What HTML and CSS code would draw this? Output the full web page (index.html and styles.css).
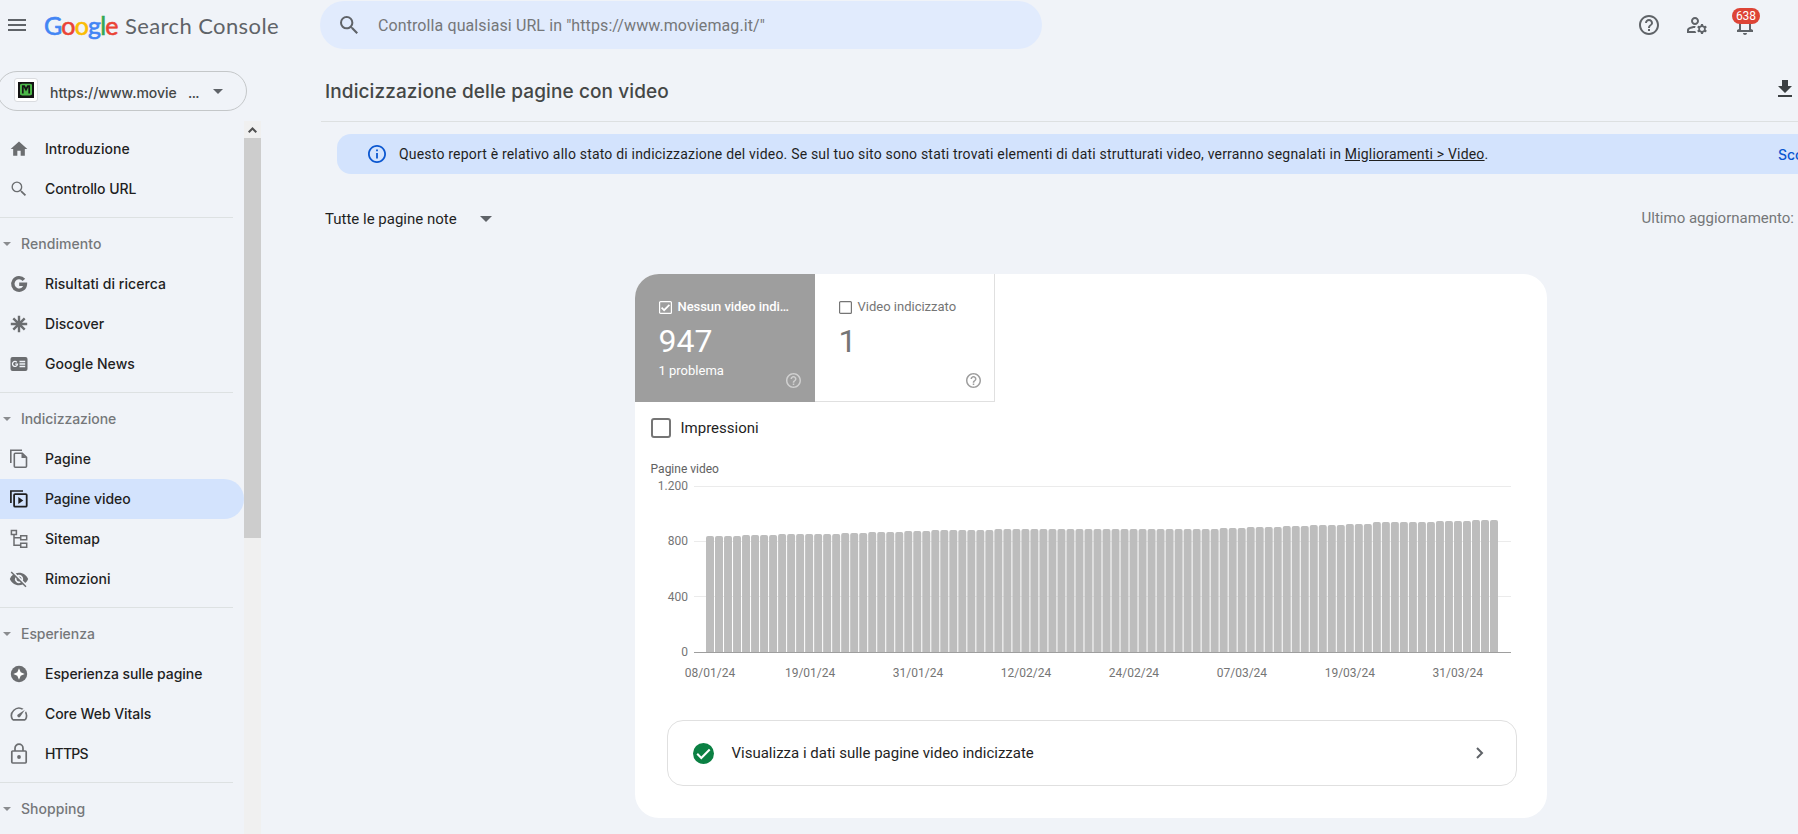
FILE: index.html
```html
<!DOCTYPE html>
<html lang="it">
<head>
<meta charset="utf-8">
<title>Google Search Console</title>
<link rel="stylesheet" href="styles.css">
</head>
<body>
<div class="app">
  <header class="topbar">
    <div class="brand">
      <svg class="menu-icon" viewBox="0 0 18 12" width="18" height="12"><path d="M0 1h18M0 6h18M0 11h18" stroke="#5f6368" stroke-width="2"/></svg>
      <span class="google"><span class="blue">G</span><span class="red">o</span><span class="yellow">o</span><span class="blue">g</span><span class="green">l</span><span class="red">e</span></span>
      <span class="product">Search Console</span>
    </div>
    <div class="search">
      <svg viewBox="3 3 17.5 17.5" width="18" height="18"><path fill="#5f6368" d="M15.5 14h-.79l-.28-.27A6.47 6.47 0 0 0 16 9.5 6.5 6.5 0 1 0 9.5 16c1.61 0 3.09-.59 4.23-1.57l.27.28v.79l5 4.99L20.49 19l-4.99-5zm-6 0C7.01 14 5 11.99 5 9.5S7.01 5 9.5 5 14 7.01 14 9.5 11.99 14 9.5 14z"/></svg>
      <span class="search-text">Controlla qualsiasi URL in "https://www.moviemag.it/"</span>
    </div>
    <div class="actions">
      <svg viewBox="0 0 24 24" width="24" height="24"><path fill="#5f6368" d="M11 18h2v-2h-2v2zm1-16C6.48 2 2 6.48 2 12s4.48 10 10 10 10-4.48 10-10S17.52 2 12 2zm0 18c-4.41 0-8-3.59-8-8s3.59-8 8-8 8 3.59 8 8-3.59 8-8 8zm0-14c-2.21 0-4 1.79-4 4h2c0-1.1.9-2 2-2s2 .9 2 2c0 2-3 1.75-3 5h2c0-2.25 3-2.5 3-5 0-2.21-1.79-4-4-4z"/></svg>
      <svg viewBox="0 0 24 24" width="24" height="24"><path fill="#5f6368" d="M4 18v-.65c0-.34.16-.66.41-.81C6.1 15.53 8.03 15 10 15c.03 0 .05 0 .08.01.1-.7.3-1.37.59-1.98-.22-.02-.44-.03-.67-.03-2.42 0-4.68.67-6.61 1.82-.88.52-1.39 1.5-1.39 2.53V20h9.26c-.42-.6-.75-1.28-.97-2H4zM10 12c2.21 0 4-1.79 4-4s-1.79-4-4-4-4 1.79-4 4 1.79 4 4 4zm0-6c1.1 0 2 .9 2 2s-.9 2-2 2-2-.9-2-2 .9-2 2-2zM20.75 16c0-.22-.03-.42-.06-.63l1.14-1.01-1-1.73-1.45.49c-.32-.27-.68-.48-1.08-.63L18 11h-2l-.3 1.49c-.4.15-.76.36-1.08.63l-1.45-.49-1 1.73 1.14 1.01c-.03.21-.06.41-.06.63s.03.42.06.63l-1.14 1.01 1 1.73 1.45-.49c.32.27.68.48 1.08.63L16 21h2l.3-1.49c.4-.15.76-.36 1.08-.63l1.45.49 1-1.73-1.14-1.01c.03-.21.06-.41.06-.63zM17 18c-1.1 0-2-.9-2-2s.9-2 2-2 2 .9 2 2-.9 2-2 2z"/></svg>
      <div class="bell">
        <svg viewBox="0 0 24 24" width="24" height="24"><path fill="#5f6368" d="M12 22c1.1 0 2-.9 2-2h-4c0 1.1.9 2 2 2zm6-6v-5c0-3.07-1.63-5.64-4.5-6.32V4c0-.83-.67-1.5-1.5-1.5s-1.5.67-1.5 1.5v.68C7.64 5.36 6 7.92 6 11v5l-2 1v2h16v-2l-2-1zm-2 1H8v-6c0-2.48 1.51-4.5 4-4.5s4 2.02 4 4.5v6z"/></svg>
        <span class="badge">638</span>
      </div>
    </div>
  </header>

  <div class="body">
    <aside class="sidebar">
      <div class="property">
        <span class="favicon"><svg viewBox="0 0 16 16" width="16" height="16"><rect width="16" height="16" fill="#141414"/><path d="M2 2.5l2-.8h8l2 .8v10l-2 1H4l-2-1z" fill="#4cb748"/><path d="M4.800 11.500V4.200h1.400L8 7.600l1.800-3.400h1.400v7.300" stroke="#141414" stroke-width="1.700" fill="none"/></svg></span>
        <span class="property-name">https://www.movie</span>
        <span class="dots">...</span>
        <svg class="property-arrow" viewBox="0 0 10 5" width="10" height="5"><path d="M0 0h10L5 5z" fill="#5f6368"/></svg>
      </div>
      <div class="nav-wrap">
        <nav class="nav">
          <a class="item"><svg viewBox="0 0 24 24" width="20" height="20"><path d="M10 20v-6h4v6h5v-8h3L12 3 2 12h3v8z"/></svg><span>Introduzione</span></a>
          <a class="item"><svg viewBox="0 0 24 24" width="20" height="20"><path d="M15.500 14h-.79l-.28-.27A6.470 6.470 0 0 0 16 9.500 6.500 6.500 0 1 0 9.500 16c1.610 0 3.090-.59 4.230-1.570l.27.28v.79l5 4.990L20.490 19l-4.990-5zm-6 .4C7 14.400 4.600 12 4.600 9.500S7 4.600 9.500 4.600s4.900 2.400 4.900 4.900-2.400 4.900-4.900 4.900z"/></svg><span class="snug">Controllo URL</span></a>
          <hr>
          <div class="group"><i class="caret"></i><span>Rendimento</span></div>
          <a class="item"><svg viewBox="0 0 20 20" width="20" height="20"><path d="M14.900 5.800A6.300 6.300 0 1 0 16.400 10.300H10.200" fill="none" stroke="#6b6d70" stroke-width="3.400"/></svg><span>Risultati di ricerca</span></a>
          <a class="item"><svg viewBox="0 0 20 20" width="20" height="20"><path d="M10 1.800v16.400M1.800 10h16.400M4.300 4.300l11.400 11.400M15.700 4.300L4.300 15.700" fill="none" stroke="#6b6d70" stroke-width="2.400"/></svg><span>Discover</span></a>
          <a class="item"><svg viewBox="0 0 20 20" width="20" height="20"><rect x="1.500" y="3" width="17" height="14" rx="2"/><path d="M7.800 8.200A2.500 2.500 0 1 0 8.500 10.200H6.200M10.500 7.500h5.700M10.500 10h5.700M10.500 12.500h5.700" fill="none" stroke="#f0f3f8" stroke-width="1.300"/></svg><span>Google News</span></a>
          <hr>
          <div class="group"><i class="caret"></i><span class="snug">Indicizzazione</span></div>
          <a class="item"><svg viewBox="0 0 20 20" width="20" height="20"><path d="M1.800 14V1.300H13M5.300 5.200v12c0 .6.400 1 1 1h10.200c.6 0 1-.4 1-1V8.300L13.300 4.200H6.300c-.6 0-1 .4-1 1z" fill="none" stroke="#6b6d70" stroke-width="1.600"/><path d="M12.500 4v5h5z"/></svg><span>Pagine</span></a>
          <a class="item active"><svg viewBox="0 0 20 20" width="20" height="20"><path d="M1.900 14V2H14" fill="none" stroke="#1f1f1f" stroke-width="1.700"/><rect x="5.100" y="5.100" width="12.600" height="12.600" rx="1" fill="none" stroke="#1f1f1f" stroke-width="1.800"/><path d="M9.300 8v7l5-3.500z"/></svg><span class="snug">Pagine video</span></a>
          <a class="item"><svg viewBox="0 0 20 20" width="20" height="20"><path d="M2.400 1.400h5v4h-5zM11.700 6.700h6v4h-6zM11.700 14.200h6v4h-6zM5 5.500v10.700h6.500M5 8.700h6.500" fill="none" stroke="#6b6d70" stroke-width="1.500"/></svg><span>Sitemap</span></a>
          <a class="item"><svg viewBox="0 0 24 24" width="20" height="20"><path d="M12 7c2.760 0 5 2.240 5 5 0 .65-.13 1.260-.36 1.830l2.920 2.920c1.510-1.260 2.700-2.890 3.430-4.750-1.730-4.390-6-7.500-11-7.500-1.400 0-2.740.25-3.980.7l2.160 2.160C10.740 7.130 11.350 7 12 7zM2 4.270l2.740 2.740A11.800 11.800 0 0 0 1 12c1.730 4.390 6 7.500 11 7.500 1.550 0 3.030-.3 4.380-.84l3.350 3.340L21 20.730 3.270 3zM7.530 9.800l1.550 1.550A2.820 2.820 0 0 0 9 12c0 1.660 1.340 3 3 3 .22 0 .44-.03.65-.08l1.550 1.550A5 5 0 0 1 7.530 9.800zm4.310-.78l3.150 3.150.02-.16c0-1.660-1.340-3-3-3z"/></svg><span>Rimozioni</span></a>
          <hr>
          <div class="group"><i class="caret"></i><span class="snug">Esperienza</span></div>
          <a class="item"><svg viewBox="0 0 20 20" width="20" height="20"><circle cx="10" cy="10" r="8.200"/><path d="M10 4.300L11.700 8.300 15.700 10l-4 1.700L10 15.700l-1.700-4L4.300 10l4-1.700z" fill="#fff"/></svg><span class="snug">Esperienza sulle pagine</span></a>
          <a class="item"><svg viewBox="0 0 24 24" width="20" height="20"><path d="M20.380 8.570l-1.230 1.850a8 8 0 0 1-.22 7.580H5.070A8 8 0 0 1 15.580 6.850l1.850-1.230A10 10 0 0 0 3.350 19a2 2 0 0 0 1.720 1h13.850a2 2 0 0 0 1.740-1 10 10 0 0 0-.27-10.440zm-9.790 6.840a2 2 0 0 0 2.830 0l5.660-8.490-8.490 5.660a2 2 0 0 0 0 2.830z"/></svg><span class="snug">Core Web Vitals</span></a>
          <a class="item"><svg viewBox="0 0 20 22" width="20" height="22"><path d="M3.700 8h12.600c.5 0 .9.400.9.900v10.200c0 .5-.4.900-.9.900H3.700c-.5 0-.9-.4-.9-.9V8.900c0-.5.400-.9.900-.9zM6 8V5.200a4 4 0 0 1 8 0V8" fill="none" stroke="#6b6d70" stroke-width="1.700"/><circle cx="10" cy="14" r="1.900"/></svg><span class="caps">HTTPS</span></a>
          <hr>
          <div class="group"><i class="caret"></i><span>Shopping</span></div>
        </nav>
        <div class="scrollbar">
          <div class="scroll-up"><svg viewBox="0 0 9 6" width="9" height="6"><path d="M.7 5.300l3.800-3.800 3.800 3.800" fill="none" stroke="#505050" stroke-width="2"/></svg></div>
          <div class="thumb"></div>
        </div>
      </div>
    </aside>

    <main class="main">
      <div class="title-row">
        <h1>Indicizzazione delle pagine con video</h1>
        <svg viewBox="5 3 14 17" width="14" height="17"><path fill="#3c4043" d="M19 9h-4V3H9v6H5l7 7 7-7zM5 18v2h14v-2H5z"/></svg>
      </div>
      <div class="banner">
        <svg viewBox="2 2 20 20" width="18" height="18"><path fill="#0b57d0" d="M11 7h2v2h-2zm0 4h2v6h-2zm1-9C6.480 2 2 6.480 2 12s4.480 10 10 10 10-4.480 10-10S17.520 2 12 2zm0 18c-4.410 0-8-3.590-8-8s3.590-8 8-8 8 3.590 8 8-3.590 8-8 8z"/></svg>
        <p>Questo report è relativo allo stato di indicizzazione del video. Se sul tuo sito sono stati trovati elementi di dati strutturati video, verranno segnalati in <a>Miglioramenti &gt; Video</a>.</p>
        <span class="learn">Scopri di più</span>
      </div>
      <div class="filter-row">
        <div class="filter"><span>Tutte le pagine note</span><svg viewBox="0 0 12 6" width="12" height="6"><path d="M0 0h12L6 6z" fill="#5f6368"/></svg></div>
        <span class="updated">Ultimo aggiornamento:</span>
      </div>

      <section class="card">
        <div class="tiles">
          <div class="tile selected">
            <div class="tile-label"><svg viewBox="0 0 13 13" width="13" height="13"><rect x=".6" y=".6" width="11.800" height="11.800" rx="1" fill="none" stroke="#fff" stroke-width="1.200"/><path d="M2.600 6.700l2.500 2.500 5.300-5.400" fill="none" stroke="#fff" stroke-width="1.700"/></svg><span>Nessun video indi…</span></div>
            <div class="tile-value">947</div>
            <div class="tile-note">1 problema</div>
            <svg class="help" viewBox="2 2 20 20" width="15" height="15"><path d="M11 18h2v-2h-2v2zm1-16C6.480 2 2 6.480 2 12s4.480 10 10 10 10-4.480 10-10S17.520 2 12 2zm0 18c-4.410 0-8-3.590-8-8s3.590-8 8-8 8 3.590 8 8-3.590 8-8 8zm0-14c-2.210 0-4 1.790-4 4h2c0-1.100.9-2 2-2s2 .9 2 2c0 2-3 1.750-3 5h2c0-2.250 3-2.500 3-5 0-2.210-1.790-4-4-4z"/></svg>
          </div>
          <div class="tile">
            <div class="tile-label"><svg viewBox="0 0 13 13" width="13" height="13"><rect x=".6" y=".6" width="11.800" height="11.800" rx="1" fill="none" stroke="#757575" stroke-width="1.200"/></svg><span>Video indicizzato</span></div>
            <div class="tile-value">1</div>
            <svg class="help" viewBox="2 2 20 20" width="15" height="15"><path d="M11 18h2v-2h-2v2zm1-16C6.480 2 2 6.480 2 12s4.480 10 10 10 10-4.480 10-10S17.520 2 12 2zm0 18c-4.410 0-8-3.590-8-8s3.590-8 8-8 8 3.590 8 8-3.590 8-8 8zm0-14c-2.210 0-4 1.790-4 4h2c0-1.100.9-2 2-2s2 .9 2 2c0 2-3 1.750-3 5h2c0-2.250 3-2.500 3-5 0-2.210-1.790-4-4-4z"/></svg>
          </div>
        </div>
        <div class="impressions"><span class="checkbox"></span><span>Impressioni</span></div>
        <svg class="chart" id="chart" viewBox="635 456 912 234" width="912" height="234"></svg>
        <div class="view-row">
          <svg viewBox="2 2 20 20" width="21" height="21"><path fill="#0b8043" d="M12 2a10 10 0 1 0 0 20 10 10 0 0 0 0-20z"/><path d="M6 12.300l3.900 3.900 8-8" fill="none" stroke="#fff" stroke-width="2"/></svg>
          <span>Visualizza i dati sulle pagine video indicizzate</span>
          <svg class="chevron" viewBox="0 0 8 12" width="8" height="12"><path d="M1 1l5 5-5 5" fill="none" stroke="#5f6368" stroke-width="2"/></svg>
        </div>
      </section>
    </main>
  </div>
</div>
<script src="chart.js"></script>
</body>
</html>
```
FILE: chart.js
```js
const svg = document.getElementById('chart');
const NS = 'http://www.w3.org/2000/svg';

function add(tag, attrs, text) {
  const el = document.createElementNS(NS, tag);
  for (const key in attrs) el.setAttribute(key, attrs[key]);
  if (text) el.textContent = text;
  svg.appendChild(el);
}

const baseline = 652;

add('text', { x: 650.6, y: 473, class: 'chart-title' }, 'Pagine video');
[['1.200', 486], ['800', 541], ['400', 596], ['0', baseline]].forEach(([label, y]) => {
  add('text', { x: 688, y: y + (y === 596 ? 5 : 4), class: 'axis-y' }, label);
  if (y !== baseline) add('rect', { x: 694, y, width: 817, height: 1, class: 'grid' });
});

// [bar height, number of consecutive days]
const runs = [
  [116, 4], [117, 4], [118, 7], [119, 3], [120, 4], [121, 3], [122, 7], [123, 25],
  [124, 3], [125, 4], [126, 3], [127, 4], [128, 3], [130, 7], [131, 4], [132, 3]
];
let day = 0;
runs.forEach(([height, count]) => {
  for (let i = 0; i < count; i++, day++) {
    const x = 706 + day * 9.0115;
    const top = baseline - height;
    add('path', { d: `M${x} ${baseline}V${top + 2}q0-2 2-2h4q2 0 2 2V${baseline}z`, class: 'bar' });
  }
});
add('rect', { x: 694, y: baseline, width: 817, height: 1, class: 'axis' });

['08/01/24', '19/01/24', '31/01/24', '12/02/24', '24/02/24', '07/03/24', '19/03/24', '31/03/24']
  .forEach((label, i) => add('text', { x: i ? 810.1 + (i - 1) * 107.95 : 710, y: 677, class: 'axis-x' }, label));
```
FILE: styles.css
```css
* { box-sizing: border-box; }
body {
  margin: 0;
  background: #f0f3f8;
  font-family: Roboto, sans-serif;
  color: #1f1f1f;
}
svg { display: block; flex: none; }
.app { width: 1798px; height: 834px; overflow: hidden; display: flex; flex-direction: column; }

.topbar { display: flex; height: 71px; flex: none; }
.brand { width: 320px; display: flex; align-items: center; height: 50px; padding-left: 8px; font-family: Lato, sans-serif; white-space: nowrap; }
.menu-icon { margin-right: 18px; }
.google { font-size: 25px; font-weight: 400; width: 81px; letter-spacing: -0.8px; -webkit-text-stroke: 0.6px; }
.blue { color: #4285f4; }
.red { color: #ea4335; }
.yellow { color: #fbbc04; }
.green { color: #34a853; }
.product { font-size: 22px; color: #5f6368; padding-top: 1px; letter-spacing: 0.4px; }
.search {
  width: 722px; height: 48px; margin-top: 1px; border-radius: 24px; background: #e1ebfd;
  display: flex; align-items: center; padding-left: 20px; gap: 20px;
}
.search-text { font-size: 16px; letter-spacing: 0.1px; color: #757779; white-space: nowrap; }
.actions { display: flex; gap: 24px; margin: 13px 0 0 595px; }
.bell { position: relative; width: 24px; height: 24px; }
.badge {
  position: absolute; left: -1px; top: -5px; width: 28px; height: 16px; border-radius: 8px;
  background: #dd4436; color: #fff; font-size: 12px; line-height: 16px; text-align: center;
}

.body { display: flex; flex: 1; min-height: 0; }
.sidebar { width: 261px; flex: none; display: flex; flex-direction: column; }
.property {
  height: 40px; width: 250px; margin-left: -3px; border: 1px solid #c4c7c9; border-radius: 20px;
  display: flex; align-items: center; padding-left: 16px; flex: none;
  font-family: Inter, sans-serif; font-weight: 500; font-size: 14px; color: #444746;
}
.favicon { width: 24px; height: 24px; border: 1px solid #dadce0; border-radius: 3px; background: #fff; display: grid; place-items: center; margin-top: -2px; }
.property-name { margin-left: 12px; width: 138px; padding-top: 2px; white-space: nowrap; }
.dots { width: 25px; padding-top: 2px; letter-spacing: -0.6px; }
.nav-wrap { display: flex; margin-top: 10px; flex: 1; min-height: 0; }
.nav { width: 244px; padding-top: 8px; font-family: Inter, sans-serif; font-size: 14px; font-weight: 500; letter-spacing: 0.06px; overflow: hidden; }
.item { display: flex; align-items: center; height: 40px; padding-left: 9px; white-space: nowrap; }
.item svg { fill: #6b6d70; margin-right: 16px; }
.item span, .group span { padding-bottom: 1px; }
.nav .snug { letter-spacing: -0.06px; }
.nav .caps { letter-spacing: -0.8px; }
.item.active { background: #d3e3fd; border-radius: 0 20px 20px 0; }
.item.active svg { fill: #1f1f1f; }
.nav hr { border: 0; height: 1px; background: #dde1e2; margin: 8px 11px 6px 0; }
.group { display: flex; align-items: center; height: 40px; padding-left: 3px; color: #75777a; }
.caret { border: 4px solid transparent; border-top-color: #8a8c8f; border-bottom: 0; margin-right: 10px; }
.scrollbar { width: 17px; background: #f0f0f0; }
.scroll-up { height: 17px; display: grid; place-items: center; }
.thumb { height: 400px; background: #cdcdcd; }

.main { flex: 1; min-width: 0; padding-left: 60px; overflow: hidden; }
.title-row { display: flex; justify-content: space-between; align-items: center; height: 51px; border-bottom: 1px solid #dde0e1; padding: 0 6px 14px 4px; }
.title-row svg { margin-top: -1px; }
h1 { margin: 4px 0 0; font-family: Inter, sans-serif; font-size: 19px; font-weight: 500; letter-spacing: 0.1px; color: #444746; white-space: nowrap; }
.banner { display: flex; align-items: center; height: 40px; margin: 12px 0 0 16px; background: #d3e3fd; border-radius: 14px 0 0 14px; padding-left: 31px; font-size: 14px; white-space: nowrap; }
.banner p { margin: 0 0 0 13px; width: 1379px; flex: none; letter-spacing: 0.195px; }
.banner a { text-decoration: underline; }
.learn { color: #0b57d0; font-family: Inter, sans-serif; font-weight: 500; }
.filter-row { display: flex; justify-content: space-between; height: 100px; padding: 34px 4px 0 4px; font-size: 15px; line-height: 20px; }
.filter { display: flex; align-items: center; gap: 23px; height: 20px; margin-top: 1px; }
.updated { color: #757779; }

.card { width: 912px; height: 544px; margin-left: 314px; background: #fff; border-radius: 24px; overflow: hidden; display: flex; flex-direction: column; }
.tiles { display: flex; height: 128px; }
.tile { position: relative; width: 180px; padding: 24px 0 0 24px; color: #757575; border: solid #e0e0e0; border-width: 0 1px 1px 0; }
.tile.selected { background: #9e9e9e; color: #fff; border: 0; }
.tile-label { display: flex; align-items: center; gap: 5.5px; font-size: 13px; line-height: 18px; white-space: nowrap; }
.selected .tile-label { font-weight: 500; letter-spacing: -0.05px; }
.tile-value { font-size: 32px; line-height: 36px; margin: 7px 0 0 -0.5px; }
.tile-note { font-size: 13px; line-height: 18px; margin: 3px 0 0 -0.5px; }
.help { position: absolute; left: 151px; top: 99px; fill: #9e9e9e; }
.selected .help { fill: #d0d0d0; }
.impressions { display: flex; align-items: center; gap: 9.5px; height: 54px; padding: 0 0 2px 16px; font-size: 15px; }
.checkbox { width: 20px; height: 20px; border: 2px solid #757575; border-radius: 3px; }
.chart-title { font-size: 12px; fill: #616161; }
.axis-y { font-size: 12px; fill: #757575; text-anchor: end; }
.axis-x { font-size: 12px; fill: #757575; text-anchor: middle; }
.grid { fill: #ebebeb; }
.bar { fill: #bdbdbd; }
.axis { fill: #9e9e9e; }
.view-row { display: flex; align-items: center; width: 850px; height: 66px; margin: 30px 0 0 32px; border: 1px solid #e0e0e0; border-radius: 16px; padding: 0 32px 0 25px; font-size: 15px; }
.view-row span { margin-left: 17.5px; }
.chevron { margin-left: auto; }
```
